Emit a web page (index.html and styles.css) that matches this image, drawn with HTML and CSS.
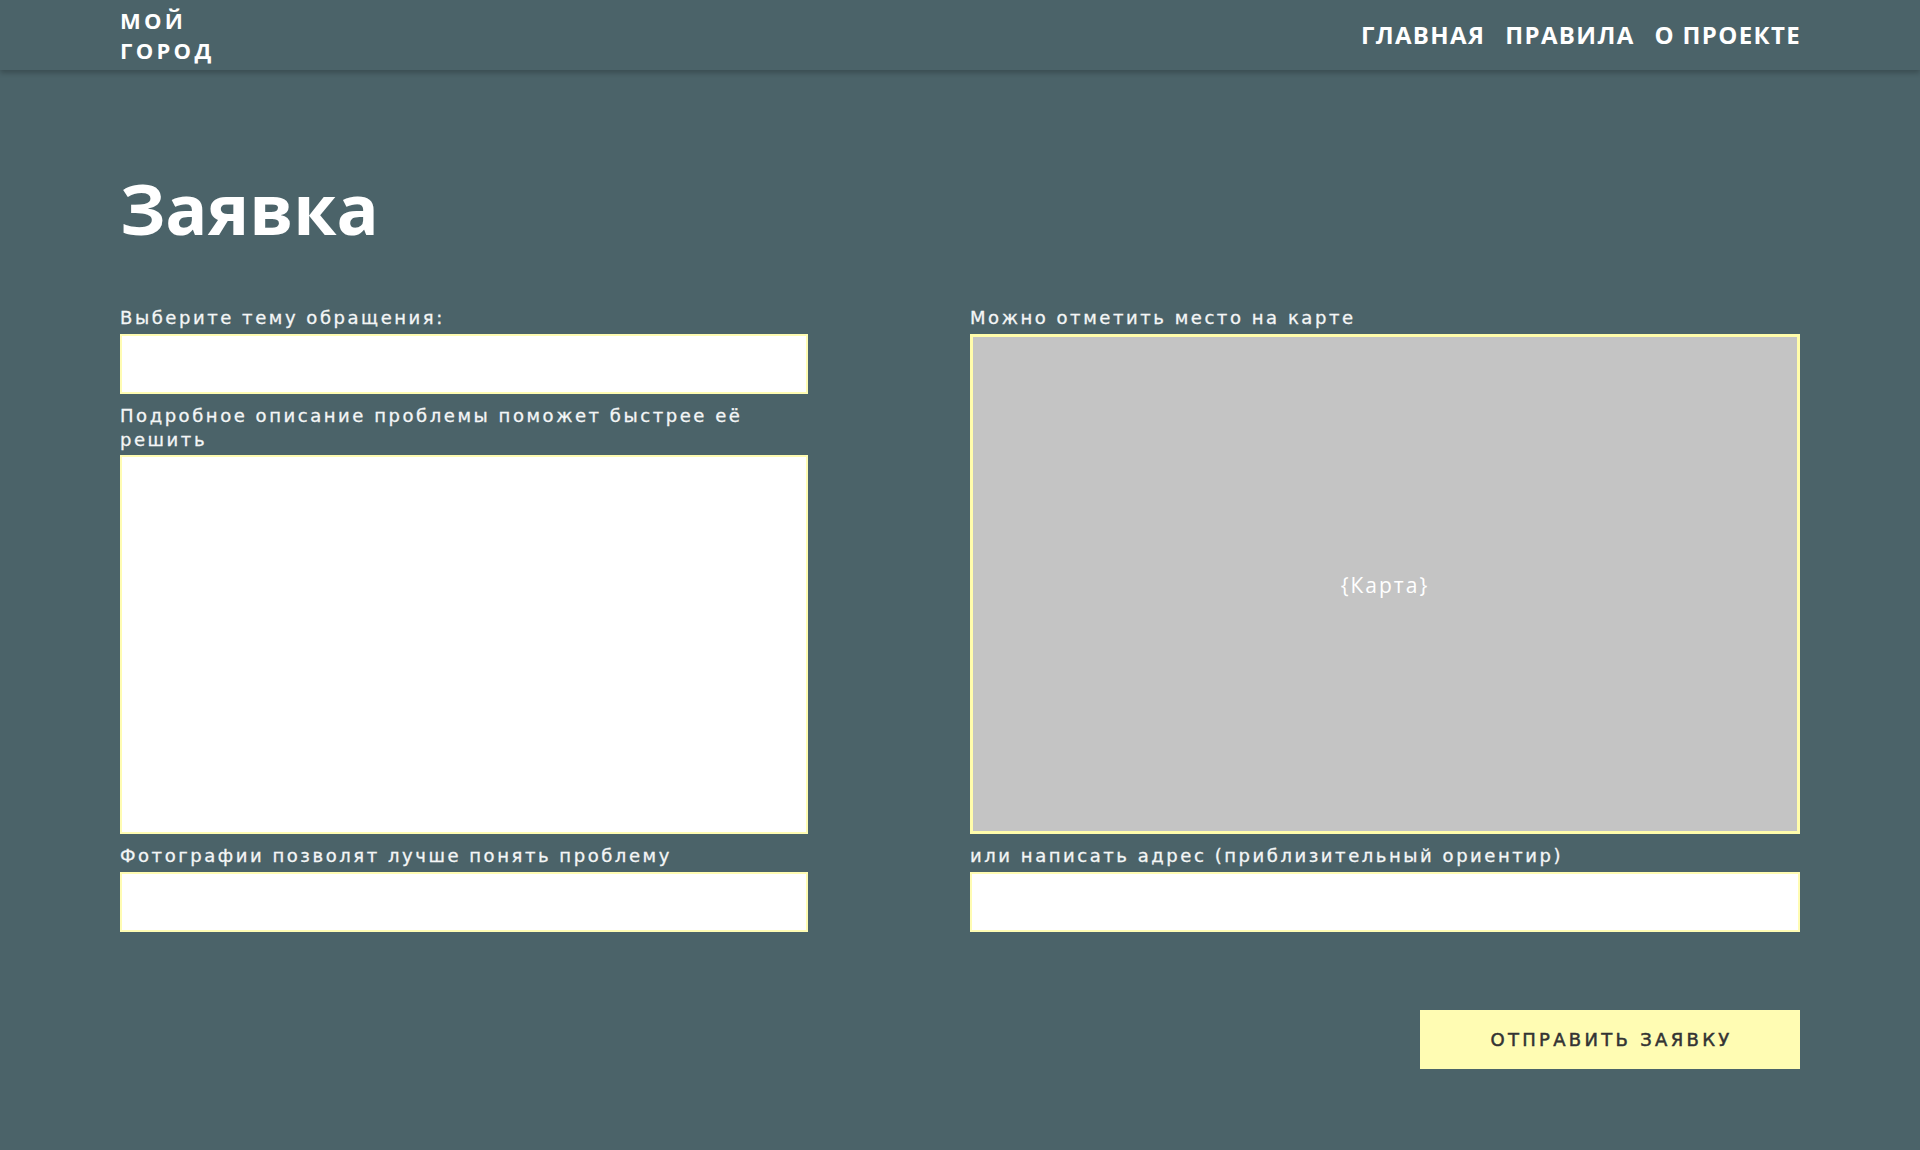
FILE: index.html
```html
<!DOCTYPE html>
<html lang="ru">
<head>
<meta charset="utf-8">
<title>Заявка — Мой город</title>
<link rel="stylesheet" href="styles.css">
</head>
<body>
<header class="header">
  <a class="logo" href="#"><span class="logo-line">МОЙ</span><span class="logo-line">ГОРОД</span></a>
  <nav class="nav">
    <a href="#">ГЛАВНАЯ</a>
    <a href="#">ПРАВИЛА</a>
    <a href="#">О ПРОЕКТЕ</a>
  </nav>
</header>
<main class="main">
  <h1 class="title">Заявка</h1>
  <form class="form">
    <label class="label l-topic">Выберите тему обращения:</label>
    <div class="field f-topic"></div>
    <label class="label l-desc">Подробное описание проблемы поможет быстрее её решить</label>
    <div class="field f-desc"></div>
    <label class="label l-photo">Фотографии позволят лучше понять проблему</label>
    <div class="field f-photo"></div>

    <label class="label l-map">Можно отметить место на карте</label>
    <div class="map">{Карта}</div>
    <label class="label l-addr">или написать адрес (приблизительный ориентир)</label>
    <div class="field f-addr"></div>
  </form>
  <div class="actions">
    <button class="submit" type="button">ОТПРАВИТЬ ЗАЯВКУ</button>
  </div>
</main>
</body>
</html>
```

FILE: styles.css
```css
* { box-sizing: border-box; }
html, body { margin: 0; padding: 0; }
body {
  background: #4b6369;
  font-family: "Open Sans", "Liberation Sans", sans-serif;
  color: #fff;
  min-height: 1150px;
}
a { color: inherit; text-decoration: none; }

.header {
  height: 70px;
  padding: 0 120px;
  display: flex;
  align-items: center;
  justify-content: space-between;
  background: #4b6369;
  box-shadow: 0 3px 5px rgba(0, 0, 0, 0.22);
  position: relative;
}
.logo {
  display: flex;
  flex-direction: column;
  font-weight: 700;
  font-size: 22px;
  letter-spacing: 3.3px;
  margin-top: -1px;
}
.logo-line {
  display: block;
  height: 30px;
  line-height: 30px;
}
.nav {
  display: flex;
  gap: 20px;
  font-weight: 700;
  font-size: 24px;
  letter-spacing: 1.35px;
  margin-right: -1px;
  margin-top: -2px;
}

.main {
  padding: 95px 120px 0;
}
.title {
  margin: 0 0 55px;
  font-size: 70px;
  line-height: 86px;
  font-weight: 700;
}

.form {
  display: grid;
  grid-template-columns: 688px 830px;
  column-gap: 162px;
  grid-template-rows: auto auto auto auto auto auto;
}
.label {
  font-family: "DejaVu Sans", "Noto Sans", sans-serif;
  font-size: 18px;
  line-height: 24px;
  letter-spacing: 2.55px;
  color: #f4f6f6;
  -webkit-text-stroke: 0.3px #f4f6f6;
}
.l-topic { grid-column: 1; grid-row: 1; height: 24px; }
.f-topic { grid-column: 1; grid-row: 2; margin-top: 4px; height: 60px; }
.l-desc { grid-column: 1; grid-row: 3; margin-top: 10px; height: 46px; }
.f-desc { grid-column: 1; grid-row: 4; margin-top: 5px; height: 379px; }
.l-photo { grid-column: 1; grid-row: 5; margin-top: 10px; height: 24px; }
.f-photo { grid-column: 1; grid-row: 6; margin-top: 4px; height: 60px; }

.l-map { grid-column: 2; grid-row: 1; }
.map { grid-column: 2; grid-row: 2 / span 3; margin-top: 4px; }
.l-addr { grid-column: 2; grid-row: 5; margin-top: 10px; }
.f-addr { grid-column: 2; grid-row: 6; margin-top: 4px; height: 60px; }

.field {
  background: #fff;
  border: 2px solid #fffcb3;
}
.map {
  background: #c4c4c4;
  border: 3px solid #fffcab;
  display: flex;
  align-items: center;
  justify-content: center;
  font-family: "Open Sans", sans-serif;
  font-size: 21px;
  letter-spacing: 2px;
  color: #fff;
  padding-top: 2px;
}

.actions {
  display: flex;
  justify-content: flex-end;
  margin-top: 78px;
}
.submit {
  width: 380px;
  height: 59px;
  border: none;
  background: #fffcb3;
  color: #333;
  font-family: "DejaVu Sans", "Noto Sans", sans-serif;
  font-weight: 400;
  font-size: 18px;
  letter-spacing: 3.3px;
  -webkit-text-stroke: 0.5px #333;
  cursor: pointer;
  padding: 0 0 0 3px;
}
```
